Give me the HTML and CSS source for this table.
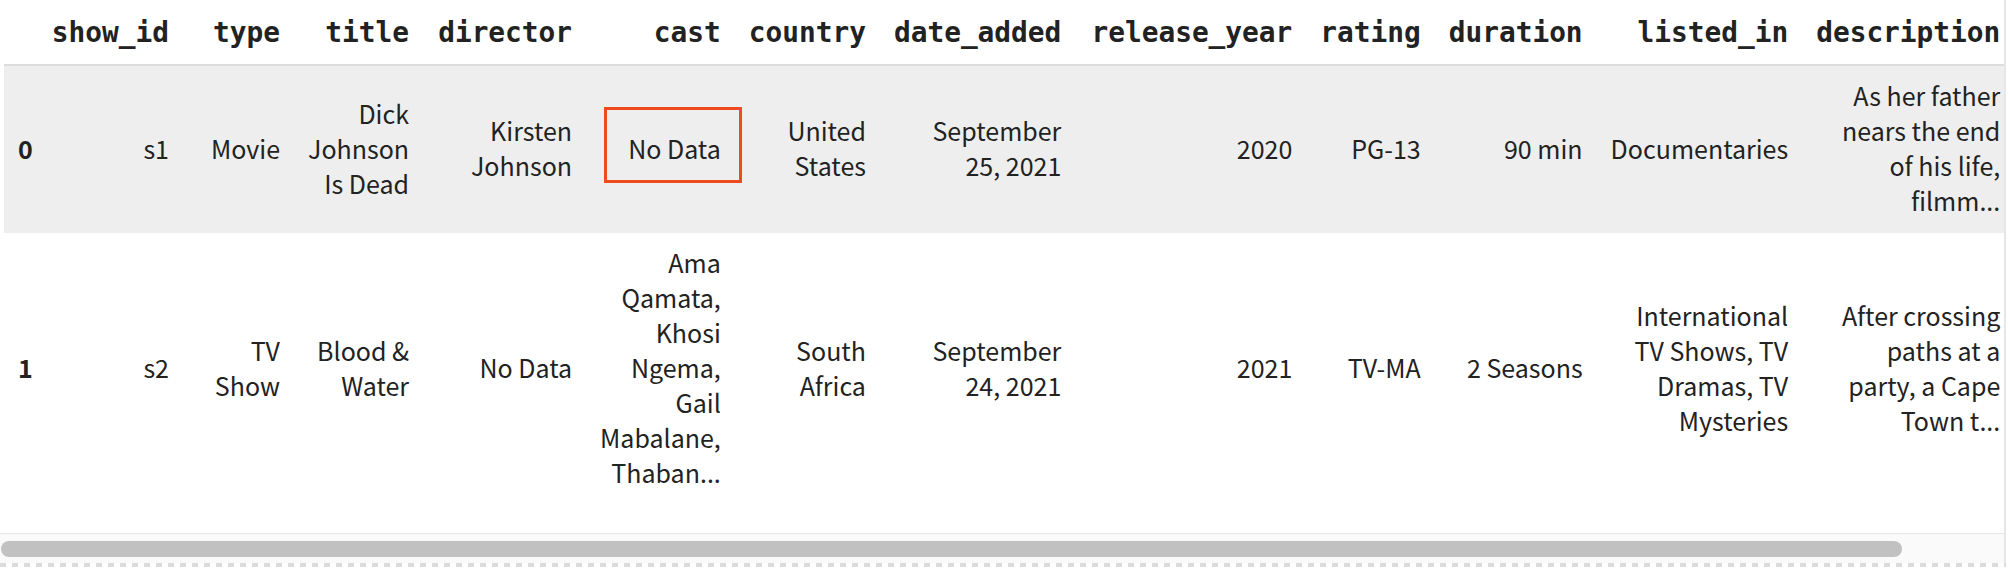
FILE: index.html
```html
<!DOCTYPE html>
<html lang="en">
<head>
<meta charset="utf-8">
<title>DataFrame</title>
<link rel="stylesheet" href="styles.css">
</head>
<body>
<div class="output">
  <div class="frame">
    <div class="scroller">
      <table class="df">
        <thead>
          <tr>
            <th class="idx"></th>
            <th class="c-id">show_id</th>
            <th class="c-type">type</th>
            <th class="c-title">title</th>
            <th class="c-director">director</th>
            <th class="c-cast">cast</th>
            <th class="c-country">country</th>
            <th class="c-date">date_added</th>
            <th class="c-year">release_year</th>
            <th class="c-rating">rating</th>
            <th class="c-duration">duration</th>
            <th class="c-listed">listed_in</th>
            <th class="c-desc">description</th>
          </tr>
        </thead>
        <tbody>
          <tr class="odd">
            <th class="idx">0</th>
            <td>s1</td>
            <td>Movie</td>
            <td>Dick Johnson Is Dead</td>
            <td>Kirsten Johnson</td>
            <td><span class="marked">No Data</span></td>
            <td>United States</td>
            <td>September 25, 2021</td>
            <td>2020</td>
            <td>PG-13</td>
            <td>90 min</td>
            <td>Documentaries</td>
            <td>As her father nears the end of his life, filmm...</td>
          </tr>
          <tr>
            <th class="idx">1</th>
            <td>s2</td>
            <td>TV Show</td>
            <td>Blood &amp; Water</td>
            <td>No Data</td>
            <td>Ama Qamata, Khosi Ngema, Gail Mabalane, Thaban...</td>
            <td>South Africa</td>
            <td>September 24, 2021</td>
            <td>2021</td>
            <td>TV-MA</td>
            <td>2 Seasons</td>
            <td>International TV Shows, TV Dramas, TV Mysteries</td>
            <td>After crossing paths at a party, a Cape Town t...</td>
          </tr>
        </tbody>
      </table>
    </div>
    <div class="hscroll">
      <div class="thumb"></div>
    </div>
  </div>
  <div class="dash"></div>
</div>
</body>
</html>
```
FILE: styles.css
```css
html, body {
  margin: 0;
  padding: 0;
  background: #ffffff;
}

.output {
  width: 2006px;
}

.frame {
  border-right: 2px solid #e6e6e6;
}

.scroller {
  overflow: hidden;
  padding: 0 0 28px 4px;
}

.df {
  width: max-content;
  border-collapse: collapse;
  border-spacing: 0;
  color: #222222;
  font-family: "Noto Sans CJK KR", "Noto Sans", sans-serif;
  font-size: 25px;
  line-height: 35px;
}

.df th,
.df td {
  text-align: right;
  vertical-align: middle;
  padding: 12px 14px 15px;
  white-space: normal;
}

.df thead th {
  font-family: "DejaVu Sans Mono", "Liberation Mono", monospace;
  font-weight: bold;
  font-size: 27.8px;
  line-height: 34px;
  padding: 16px 14px 14px;
  border-bottom: 2px solid #dddddd;
  vertical-align: bottom;
  white-space: nowrap;
}

.df th.idx {
  padding-right: 1px;
}

.df tbody th.idx {
  text-align: left;
  font-weight: bold;
}

.df tbody tr.odd {
  background: #eeeeee;
}

.idx { width: 17px; }
.c-id { width: 119px; }
.c-type { width: 83px; }
.c-title { width: 98px; }
.c-director { width: 135px; }
.c-cast { width: 119px; }
.c-country { width: 116px; }
.c-date { width: 166px; }
.c-year { width: 203px; }
.c-rating { width: 100px; }
.c-duration { width: 133px; }
.c-listed { width: 176px; }
.c-desc { width: 183px; }

.marked {
  position: relative;
  display: inline-block;
}

.marked::after {
  content: "";
  position: absolute;
  top: -24px;
  bottom: -17px;
  left: -24px;
  right: -21px;
  border: 3px solid #f04a1f;
}

.hscroll {
  height: 29px;
  border-top: 1px solid #e6e6e6;
  background: #fafafa;
  display: flex;
  align-items: center;
  padding-left: 1px;
}

.thumb {
  width: 94.9%;
  height: 16px;
  border-radius: 8px;
  background: #c1c1c1;
}

.dash {
  height: 4px;
  background: repeating-linear-gradient(90deg, #dcdcdc 0 6px, transparent 6px 12px);
}
```
